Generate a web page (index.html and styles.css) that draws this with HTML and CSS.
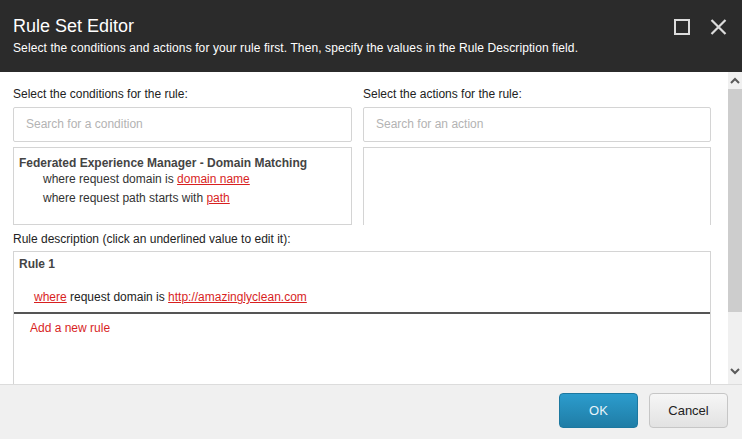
FILE: index.html
```html
<!DOCTYPE html>
<html>
<head>
<meta charset="utf-8">
<link rel="stylesheet" href="styles.css">
</head>
<body>
<div class="dialog">
  <header class="header">
    <div class="titles">
      <h1 class="title">Rule Set Editor</h1>
      <p class="subtitle">Select the conditions and actions for your rule first. Then, specify the values in the Rule Description field.</p>
    </div>
    <div class="window-btns">
      <svg class="icon" width="16" height="16" viewBox="0 0 16 16"><rect x="1" y="1" width="14" height="14" fill="none" stroke="#dcdcdc" stroke-width="2"/></svg>
      <svg class="icon" width="17" height="16" viewBox="0 0 17 16"><path d="M1.5 1 L15.5 15 M15.5 1 L1.5 15" stroke="#dcdcdc" stroke-width="2.2" fill="none"/></svg>
    </div>
  </header>
  <main class="content">
    <div class="scroll">
      <div class="columns">
        <section class="col">
          <div class="label">Select the conditions for the rule:</div>
          <div class="search">Search for a condition</div>
          <div class="list">
            <div class="group-title">Federated Experience Manager - Domain Matching</div>
            <div class="item">where request domain is <span class="link">domain name</span></div>
            <div class="item">where request path starts with <span class="link">path</span></div>
          </div>
        </section>
        <section class="col">
          <div class="label">Select the actions for the rule:</div>
          <div class="search">Search for an action</div>
          <div class="list list-open"></div>
        </section>
      </div>
      <div class="label desc-label">Rule description (click an underlined value to edit it):</div>
      <div class="rulebox">
        <div class="rule-title">Rule 1</div>
        <div class="rule-line"><span class="link">where</span> request domain is <span class="link">http://amazinglyclean.com</span></div>
        <div class="rule-sep"></div>
        <div class="add-rule">Add a new rule</div>
      </div>
    </div>
    <div class="scrollbar">
      <div class="sb-btn">
        <svg width="10" height="7" viewBox="0 0 10 7"><path d="M1 6 L5 2 L9 6" stroke="#5a5a5a" stroke-width="2" fill="none"/></svg>
      </div>
      <div class="sb-thumb"></div>
      <div class="sb-track"></div>
      <div class="sb-btn sb-btn-down">
        <svg width="10" height="7" viewBox="0 0 10 7"><path d="M1 1 L5 5 L9 1" stroke="#5a5a5a" stroke-width="2" fill="none"/></svg>
      </div>
    </div>
  </main>
  <footer class="footer">
    <button class="btn btn-ok">OK</button>
    <button class="btn btn-cancel">Cancel</button>
  </footer>
</div>
</body>
</html>
```
FILE: styles.css
```css
html, body {
  margin: 0;
  padding: 0;
}
body {
  width: 742px;
  height: 439px;
  overflow: hidden;
  font-family: "Liberation Sans", Arial, sans-serif;
  font-size: 12px;
  color: #333;
  background: #fff;
}
.dialog {
  display: flex;
  flex-direction: column;
  height: 439px;
}
.header {
  height: 72px;
  background: #2b2b2b;
  color: #fff;
  display: flex;
  justify-content: space-between;
  box-sizing: border-box;
  padding: 0 15px 0 13px;
  flex-shrink: 0;
}
.title {
  margin: 0;
  font-size: 18px;
  font-weight: normal;
  line-height: 21px;
  padding-top: 16px;
}
.subtitle {
  margin: 4px 0 0;
  font-size: 12px;
  line-height: 14px;
  letter-spacing: 0.1px;
}
.window-btns {
  display: flex;
  gap: 20px;
  padding-top: 19px;
}
.icon {
  display: block;
}
.content {
  flex: 1;
  display: flex;
  min-height: 0;
  overflow: hidden;
}
.scroll {
  flex: 1;
  padding: 15px 17px 0 13px;
  overflow: hidden;
}
.columns {
  display: grid;
  grid-template-columns: 339px 348px;
  gap: 11px;
}
.label {
  line-height: 14px;
  color: #222;
  margin-bottom: 6px;
}
.search {
  height: 35px;
  box-sizing: border-box;
  border: 1px solid #d4d4d4;
  border-radius: 2px;
  padding: 0 12px;
  line-height: 33px;
  color: #b3b3b3;
}
.list {
  margin-top: 5px;
  height: 78px;
  box-sizing: border-box;
  border: 1px solid #d4d4d4;
  padding: 8px 5px 0;
}
.list-open {
  border-bottom: none;
}
.group-title {
  font-weight: bold;
  color: #444;
  line-height: 15px;
}
.item {
  padding-left: 24px;
  line-height: 16px;
  color: #333;
}
.item + .item {
  margin-top: 3px;
}
.link {
  color: #d81f1f;
  text-decoration: underline;
}
.desc-label {
  margin-top: 7px;
  margin-bottom: 5px;
}
.rulebox {
  border: 1px solid #d4d4d4;
  border-bottom: none;
  height: 140px;
  box-sizing: border-box;
}
.rule-title {
  font-weight: bold;
  color: #444;
  padding: 5px 5px 0;
  line-height: 14px;
}
.rule-line {
  padding: 19px 20px 0;
  line-height: 14px;
  color: #222;
}
.rule-sep {
  margin-top: 8px;
  height: 2px;
  background: #555;
}
.add-rule {
  color: #d81f1f;
  padding: 7px 16px 0;
  line-height: 14px;
}
.scrollbar {
  width: 14px;
  background: #f0f0f0;
  display: flex;
  flex-direction: column;
  flex-shrink: 0;
}
.sb-btn {
  height: 17px;
  display: flex;
  align-items: center;
  justify-content: center;
}
.sb-btn svg {
  display: block;
}
.sb-thumb {
  height: 223px;
  background: #cdcdcd;
}
.sb-track {
  flex: 1;
}
.sb-btn-down {
  height: 16px;
  align-items: flex-start;
  padding-top: 0;
}
.footer {
  height: 55px;
  box-sizing: border-box;
  background: #f0f0f0;
  border-top: 1px solid #dcdcdc;
  display: flex;
  justify-content: flex-end;
  align-items: flex-start;
  gap: 11px;
  padding: 8px 14px 0 0;
  flex-shrink: 0;
}
.btn {
  width: 79px;
  height: 35px;
  border-radius: 4px;
  font-family: "Liberation Sans", Arial, sans-serif;
  font-size: 13px;
  padding: 0;
}
.btn-ok {
  background: linear-gradient(#2c9ccd, #1f7da6);
  border: 1px solid #1c78a0;
  color: #e8f4fa;
}
.btn-cancel {
  background: linear-gradient(#f6f6f6, #e2e2e2);
  border: 1px solid #c6c6c6;
  color: #222;
}
```
